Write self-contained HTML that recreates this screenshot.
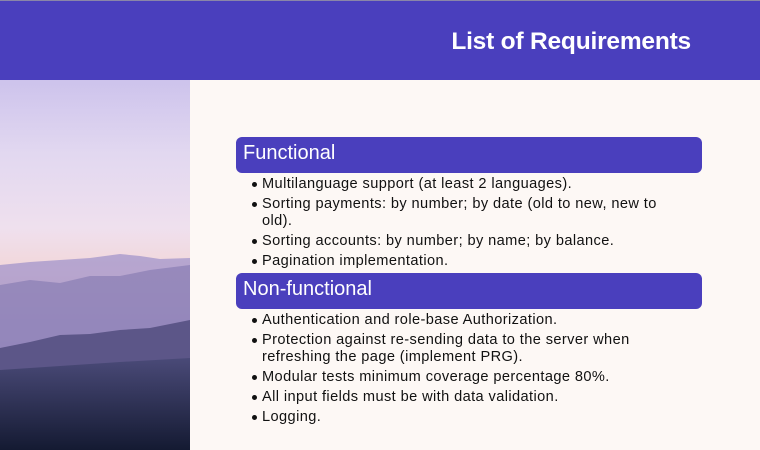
<!DOCTYPE html>
<html><head><meta charset="utf-8"><style>
*{margin:0;padding:0;box-sizing:border-box}
body{width:760px;height:450px;overflow:hidden;background:#fdf8f5;font-family:"Liberation Sans",sans-serif;position:relative}
.hdr{position:absolute;left:0;top:0;width:760px;height:80px;background:#4a3fbd;border-top:1px solid #8a86a8}
.hdr h1{position:absolute;right:69px;top:27px;color:#fff;font-size:24.5px;font-weight:bold;letter-spacing:-0.2px}
.img{position:absolute;left:0;top:80px;width:190px;height:370px;background:linear-gradient(#cdc3ec 0%,#e2d8f0 20%,#efe0ee 40%,#f2d6d8 52%,#f1c9c4 58%,#b6a6cf 66%,#9a8dc0 75%,#7c74a6 85%,#5b5a88 92%,#1c213c 100%);overflow:hidden}
.box{position:absolute;left:236px;width:466px;height:36px;background:#4a3fbd;border-radius:6px;color:#fff;font-size:20px;padding:5px 0 0 7px}
ul{position:absolute;left:262px;width:412px;font-size:14.6px;letter-spacing:0.4px;color:#111;list-style:none}
li{position:relative;line-height:17px;margin-bottom:3px}
li:before{content:"";position:absolute;left:-10px;top:6px;width:5px;height:5px;border-radius:50%;background:#111}
</style></head><body>
<div class="hdr"><h1>List of Requirements</h1></div>
<div class="img"><svg width="190" height="370" style="position:absolute;left:0;top:0">
<path d="M0 185 L30 182 L60 180 L90 178 L120 174 L140 176 L160 179 L190 178 L190 370 L0 370Z" fill="#a799cc" opacity="0.8"/>
<path d="M0 205 L30 200 L60 203 L90 196 L120 196 L150 190 L190 185 L190 370 L0 370Z" fill="#8e82b6" opacity="0.8"/>
<path d="M0 268 L30 262 L60 255 L90 254 L120 250 L150 248 L190 240 L190 370 L0 370Z" fill="#5c5688"/>
<defs><linearGradient id="g" x1="0" y1="0" x2="0" y2="1"><stop offset="0" stop-color="#4a4a78"/><stop offset="1" stop-color="#141a32"/></linearGradient></defs>
<path d="M0 290 L60 286 L120 282 L190 278 L190 370 L0 370Z" fill="url(#g)"/>
</svg></div>
<div class="box" style="top:137px">Functional</div>
<ul style="top:176px">
<li>Multilanguage support (at least 2 languages).</li>
<li>Sorting payments: by number; by date (old to new, new to old).</li>
<li>Sorting accounts: by number; by name; by balance.</li>
<li>Pagination implementation.</li>
</ul>
<div class="box" style="top:273px">Non-functional</div>
<ul style="top:312px">
<li>Authentication and role-base Authorization.</li>
<li>Protection against re-sending data to the server when refreshing the page (implement PRG).</li>
<li>Modular tests minimum coverage percentage 80%.</li>
<li>All input fields must be with data validation.</li>
<li>Logging.</li>
</ul>
</body></html>
